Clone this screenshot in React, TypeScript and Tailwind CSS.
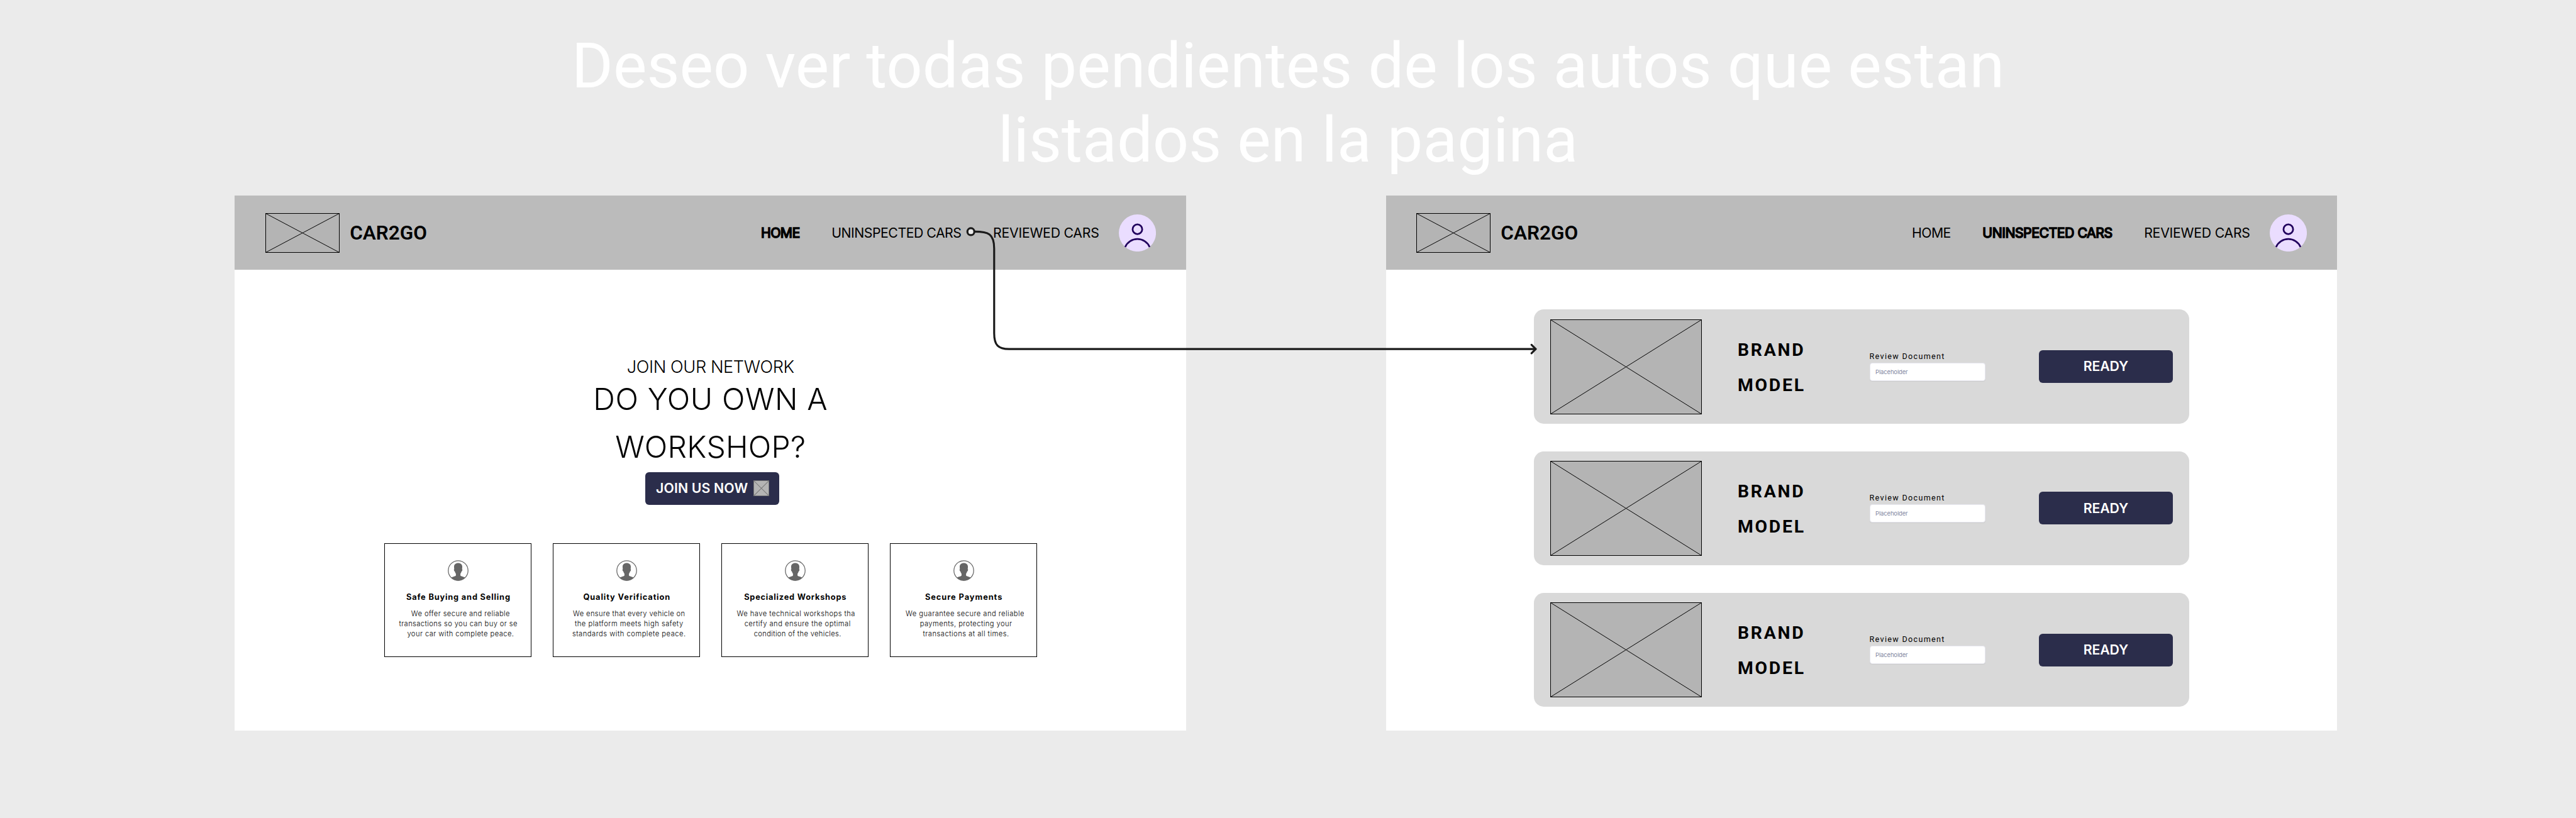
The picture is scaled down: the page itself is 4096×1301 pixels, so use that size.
type NavName = "HOME" | "UNINSPECTED CARS" | "REVIEWED CARS";

const navItems: { name: NavName; tracking: string }[] = [
  { name: "HOME", tracking: "tracking-[-0.6px]" },
  { name: "UNINSPECTED CARS", tracking: "tracking-[-0.49px]" },
  { name: "REVIEWED CARS", tracking: "tracking-[-0.25px]" },
];

const features = [
  {
    title: "Safe Buying and Selling",
    titleTracking: "tracking-[0.82px]",
    lines: [
      { text: "We offer secure and reliable", style: "tracking-[0.4px]" },
      { text: "transactions so you can buy or se", style: "tracking-[0.4px] self-start -ml-[6px]" },
      { text: "your car with complete peace.", style: "tracking-[0.43px]" },
    ],
  },
  {
    title: "Quality Verification",
    titleTracking: "tracking-[0.9px]",
    lines: [
      { text: "We ensure that every vehicle on", style: "tracking-[0.37px]" },
      { text: "the platform meets high safety", style: "tracking-[0.5px]" },
      { text: "standards with complete peace.", style: "tracking-[0.5px]" },
    ],
  },
  {
    title: "Specialized Workshops",
    titleTracking: "tracking-[0.78px]",
    lines: [
      { text: "We have technical workshops tha", style: "tracking-[0.45px] self-start -ml-[4.6px]" },
      { text: "certify and ensure the optimal", style: "tracking-[0.47px]" },
      { text: "condition of the vehicles.", style: "tracking-[0.33px]" },
    ],
  },
  {
    title: "Secure Payments",
    titleTracking: "tracking-[0.95px]",
    lines: [
      { text: "We guarantee secure and reliable", style: "tracking-[0.46px] self-start -ml-[4px]" },
      { text: "payments, protecting your", style: "tracking-[0.43px]" },
      { text: "transactions at all times.", style: "tracking-[0.48px]" },
    ],
  },
];

function ImagePlaceholder({
  width,
  height,
  className,
  line = "#000",
}: {
  width: number;
  height: number;
  className: string;
  line?: string;
}) {
  return (
    <svg
      className={className}
      viewBox={`0 0 ${width} ${height}`}
      preserveAspectRatio="none"
      fill="none"
      stroke={line}
      aria-hidden="true"
    >
      <rect x="0.5" y="0.5" width={width - 1} height={height - 1} fill="#b4b4b4" />
      <path d={`M0.5 0.5 L${width - 0.5} ${height - 0.5} M${width - 0.5} 0.5 L0.5 ${height - 0.5}`} />
    </svg>
  );
}

function Avatar() {
  return (
    <svg className="h-[59.1px] w-[59.1px] shrink-0" viewBox="0 0 75 75" fill="none" aria-hidden="true">
      <circle cx="37.5" cy="37.5" r="37.5" fill="#eaddff" />
      <circle cx="37.5" cy="30" r="9.7" stroke="#21005d" strokeWidth="3.5" />
      <path d="M12.8 65.8 A27 27 0 0 1 62.2 65.8" stroke="#21005d" strokeWidth="3.5" />
    </svg>
  );
}

function PersonIcon() {
  return (
    <svg className="h-[33px] w-[33px] shrink-0" viewBox="0 0 42 42" fill="none" aria-hidden="true">
      <circle cx="21" cy="21" r="20" stroke="#666" strokeWidth="1.6" />
      <path
        fill="#666"
        d="M21 5.7c-5.4 0-8.3 3-8.3 7.6 0 1.800.2 3.300.4 4.900-.7.2-.8 1-.5 2.300.3 1.400.8 2 1.500 2.200.5 2 1.300 3.500 2.300 4.600v3.200c0 .8-.4 1.200-1.300 1.500-3 1-6.300 1.900-8.600 3.400A20.300 20.300 0 0 0 21 41.300 20.300 20.300 0 0 0 35.500 35.400c-2.300-1.500-5.600-2.400-8.600-3.400-.9-.3-1.300-.7-1.300-1.500v-3.200c1-1.100 1.800-2.600 2.300-4.600.7-.2 1.200-.8 1.500-2.200.3-1.300.2-2.100-.5-2.300.2-1.600.4-3.100.4-4.900 0-4.600-2.900-7.600-8.300-7.600z"
      />
    </svg>
  );
}

function Header({ active }: { active: NavName }) {
  return (
    <header className="flex h-[118.2px] items-center bg-[#bbbbbb] px-[48.1px]">
      <ImagePlaceholder width={118} height={63} className="h-[63px] w-[118px] shrink-0" />
      <span className="ml-[16.6px] font-[Roboto,sans-serif] text-[31.5px] leading-none font-semibold">CAR2GO</span>
      <nav className="mr-[31.3px] ml-auto flex gap-[50.6px] text-[21.27px] leading-none whitespace-nowrap">
        {navItems.map(({ name, tracking }) => (
          <a
            key={name}
            className={name === active ? `${tracking} [-webkit-text-stroke:1.6px_#000]` : tracking}
          >
            {name}
          </a>
        ))}
      </nav>
      <Avatar />
    </header>
  );
}

function HomeScreen() {
  return (
    <section className="flex h-[850.9px] w-[1512.66px] shrink-0 flex-col bg-white">
      <Header active="HOME" />
      <div className="flex flex-col items-center pt-[140.1px]">
        <p className="text-[27.18px] leading-[27.8px] font-light tracking-[-0.425px]">JOIN OUR NETWORK</p>
        <h2 className="flex flex-col items-center text-[48.06px] leading-[75.63px] font-light">
          <span className="tracking-[0.64px]">DO YOU OWN A</span>
          <span className="tracking-[0.28px]">WORKSHOP?</span>
        </h2>
        <button className="mt-[2.3px] ml-[6px] flex h-[52px] w-[212.7px] items-center rounded-[6px] bg-[#2b2d4b] pl-[16.5px] text-[21.27px] leading-none font-semibold tracking-[0.149px] whitespace-nowrap text-white">
          JOIN US NOW
          <ImagePlaceholder width={25} height={25} line="#777" className="ml-[8.6px] h-[25.2px] w-[25.2px] shrink-0" />
        </button>
        <div className="mt-[61.5px] ml-px flex gap-[33.9px]">
          {features.map((f) => (
            <article
              key={f.title}
              className="flex h-[180.4px] w-[234px] flex-col items-center border border-black pt-[26px] whitespace-nowrap"
            >
              <PersonIcon />
              <h3 className={`mt-[16.8px] pl-px text-[12.8px] leading-[18.9px] font-bold ${f.titleTracking}`}>
                {f.title}
              </h3>
              <div className="mt-[9px] ml-[21px] flex w-[191px] flex-col items-center self-start overflow-hidden pl-[7px] text-[11.2px] leading-[15.76px] font-light">
                {f.lines.map((l) => (
                  <p key={l.text} className={l.style}>
                    {l.text}
                  </p>
                ))}
              </div>
            </article>
          ))}
        </div>
      </div>
    </section>
  );
}

function CarCard() {
  return (
    <article className="flex h-[181.2px] w-[1041.5px] items-center rounded-[15.8px] bg-[#d9d9d9] px-[26px]">
      <ImagePlaceholder width={241} height={151} className="h-[151px] w-[241px] shrink-0" />
      <div className="ml-[56.8px] w-[209.6px] pt-[3.5px] font-[Roboto,sans-serif] text-[28.36px] leading-[56px] font-bold tracking-[2.75px]">
        <p>BRAND</p>
        <p>MODEL</p>
      </div>
      <div className="-mt-[1.4px] w-[184.4px]">
        <p className="font-[Roboto,sans-serif] text-[12.6px] leading-[15px] tracking-[1.3px]">Review Document</p>
        <div className="mt-[2.9px] flex h-[29.1px] items-center rounded-[4px] border border-[#e6e6ee] bg-white pl-[8.5px] text-[9.45px] leading-none tracking-[-0.13px] text-[#8186a0] shadow-[0_1px_1px_rgba(0,0,0,0.06)]">
          Placeholder
        </div>
      </div>
      <button className="ml-auto h-[52px] w-[212.7px] rounded-[6px] bg-[#2b2d4b] text-[21.27px] leading-none font-semibold tracking-[-0.15px] text-white">
        READY
      </button>
    </article>
  );
}

function UninspectedScreen() {
  return (
    <section className="flex h-[850.9px] w-[1512.66px] shrink-0 flex-col bg-white">
      <Header active="UNINSPECTED CARS" />
      <div className="flex flex-col items-center gap-[44.1px] pt-[63px]">
        <CarCard />
        <CarCard />
        <CarCard />
      </div>
    </section>
  );
}

function Connector() {
  return (
    <svg
      className="absolute top-[354.53px] left-[1528.41px] h-[212.72px] w-[921.77px]"
      viewBox="1940 450 1170 270"
      fill="none"
      stroke="#1a1a1a"
      strokeWidth="4"
      strokeLinecap="round"
      strokeLinejoin="round"
      aria-hidden="true"
    >
      <path d="M1968 467 C1995 467 2007 471 2007 501 V672 C2007 696 2015 704 2037 704 H3100" />
      <path d="M3091.500 695.500 L3100 704 L3091.500 712.500" />
      <circle cx="1960" cy="467" r="7" fill="#ebebeb" />
    </svg>
  );
}

export default function App() {
  return (
    <main className="relative h-[1301px] w-[4096px] overflow-hidden bg-[#ebebeb] pt-[45.9px] font-[Inter,sans-serif] text-black">
      <h1 className="mb-[29px] text-center font-[Roboto,sans-serif] text-[100.84px] leading-[118.18px] text-white">
        Deseo ver todas pendientes de los autos que estan
        <br />
        listados en la pagina
      </h1>
      <div className="flex gap-[317.5px] pl-[373.44px]">
        <HomeScreen />
        <UninspectedScreen />
      </div>
      <Connector />
    </main>
  );
}
